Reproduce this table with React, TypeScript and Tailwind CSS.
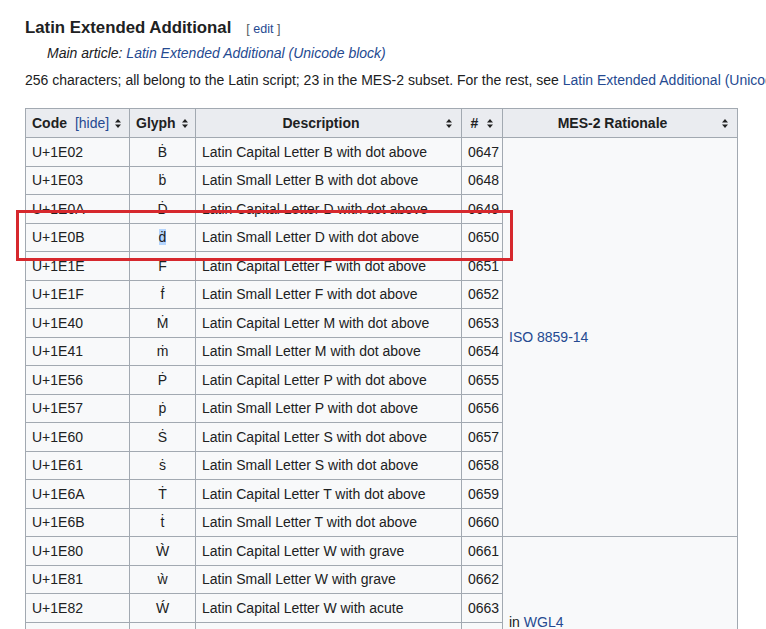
import React from 'react'

type Row = { code: string; glyph: string; desc: string; num: string }

const rows: Row[] = [
  { code: 'U+1E02', glyph: 'Ḃ', desc: 'Latin Capital Letter B with dot above', num: '0647' },
  { code: 'U+1E03', glyph: 'ḃ', desc: 'Latin Small Letter B with dot above', num: '0648' },
  { code: 'U+1E0A', glyph: 'Ḋ', desc: 'Latin Capital Letter D with dot above', num: '0649' },
  { code: 'U+1E0B', glyph: 'ḋ', desc: 'Latin Small Letter D with dot above', num: '0650' },
  { code: 'U+1E1E', glyph: 'Ḟ', desc: 'Latin Capital Letter F with dot above', num: '0651' },
  { code: 'U+1E1F', glyph: 'ḟ', desc: 'Latin Small Letter F with dot above', num: '0652' },
  { code: 'U+1E40', glyph: 'Ṁ', desc: 'Latin Capital Letter M with dot above', num: '0653' },
  { code: 'U+1E41', glyph: 'ṁ', desc: 'Latin Small Letter M with dot above', num: '0654' },
  { code: 'U+1E56', glyph: 'Ṗ', desc: 'Latin Capital Letter P with dot above', num: '0655' },
  { code: 'U+1E57', glyph: 'ṗ', desc: 'Latin Small Letter P with dot above', num: '0656' },
  { code: 'U+1E60', glyph: 'Ṡ', desc: 'Latin Capital Letter S with dot above', num: '0657' },
  { code: 'U+1E61', glyph: 'ṡ', desc: 'Latin Small Letter S with dot above', num: '0658' },
  { code: 'U+1E6A', glyph: 'Ṫ', desc: 'Latin Capital Letter T with dot above', num: '0659' },
  { code: 'U+1E6B', glyph: 'ṫ', desc: 'Latin Small Letter T with dot above', num: '0660' },
  { code: 'U+1E80', glyph: 'Ẁ', desc: 'Latin Capital Letter W with grave', num: '0661' },
  { code: 'U+1E81', glyph: 'ẁ', desc: 'Latin Small Letter W with grave', num: '0662' },
  { code: 'U+1E82', glyph: 'Ẃ', desc: 'Latin Capital Letter W with acute', num: '0663' },
  { code: 'U+1E83', glyph: 'ẃ', desc: 'Latin Small Letter W with acute', num: '0664' },
  { code: 'U+1E84', glyph: 'Ẅ', desc: 'Latin Capital Letter W with diaeresis', num: '0665' },
  { code: 'U+1E85', glyph: 'ẅ', desc: 'Latin Small Letter W with diaeresis', num: '0666' },
]

function SortIcon() {
  return (
    <svg width="6" height="9" viewBox="0 0 6 9" className="shrink-0 ml-[6px]">
      <path d="M3 0 L6 3.6 H0 Z M0 5.4 H6 L3 9 Z" fill="#222" />
    </svg>
  )
}

function Th({ children }: { children: React.ReactNode }) {
  return (
    <th className="h-[29px] border border-[#a2a9b1] bg-[#eaecf0] pl-[6px] pr-[9px] py-0 font-bold">
      <div className="flex items-center">
        <span className="flex-1 text-center whitespace-nowrap">{children}</span>
        <SortIcon />
      </div>
    </th>
  )
}

const td = 'border border-[#a2a9b1] px-[6px] py-0 whitespace-nowrap'

export default function App() {
  return (
    <div className="relative w-[766px] h-[629px] overflow-hidden bg-white pl-[25px] text-[#202122] font-['Liberation_Sans',Arial,sans-serif]">
      {/* Heading */}
      <div className="pt-[16px] flex items-baseline">
        <h3 className="text-[16.8px] leading-[24px] font-bold">Latin Extended Additional</h3>
        <span className="ml-[15px] text-[12.5px] text-[#54595d]">
          [ <span className="text-[#254a91]">edit</span> ]
        </span>
      </div>

      <div className="mt-[2px] pl-[22px] text-[14px] leading-[22px] italic">
        Main article: <span className="text-[#254a91]">Latin Extended Additional (Unicode block)</span>
      </div>

      <p className="mt-[5px] text-[14px] leading-[22px] whitespace-nowrap">
        256 characters; all belong to the Latin script; 23 in the MES-2 subset. For the rest, see{' '}
        <span className="text-[#254a91]">Latin Extended Additional (Unicode block)</span>.
      </p>

      {/* Table */}
      <table className="mt-[17px] w-[712px] table-fixed border-collapse bg-[#f8f9fa] text-[14px] leading-[20px]">
        <colgroup>
          <col className="w-[104px]" />
          <col className="w-[66px]" />
          <col className="w-[266px]" />
          <col className="w-[41px]" />
          <col className="w-[235px]" />
        </colgroup>
        <thead>
          <tr>
            <Th>
              Code <span className="ml-[4px] font-normal text-[#254a91]">[hide]</span>
            </Th>
            <Th>Glyph</Th>
            <Th>Description</Th>
            <Th>#</Th>
            <Th>MES-2 Rationale</Th>
          </tr>
        </thead>
        <tbody>
          {rows.map((r, i) => (
            <tr key={r.code} className="h-[28.5px]">
              <td className={td}>{r.code}</td>
              <td className={`${td} text-center`}>
                {r.code === 'U+1E0B' ? <span className="bg-[#b4d5fe]">{r.glyph}</span> : r.glyph}
              </td>
              <td className={td}>{r.desc}</td>
              <td className={`${td} px-[5px]`}>{r.num}</td>
              {i === 0 && (
                <td rowSpan={14} className={`${td} align-middle`}>
                  <span className="text-[#254a91]">ISO 8859-14</span>
                </td>
              )}
              {i === 14 && (
                <td rowSpan={6} className={`${td} align-middle`}>
                  in <span className="text-[#254a91]">WGL4</span>
                </td>
              )}
            </tr>
          ))}
        </tbody>
      </table>

      {/* Annotation box */}
      <div className="absolute left-[16px] top-[210px] w-[497px] h-[51px] border-[3px] border-[#d6282d] pointer-events-none" />
    </div>
  )
}
